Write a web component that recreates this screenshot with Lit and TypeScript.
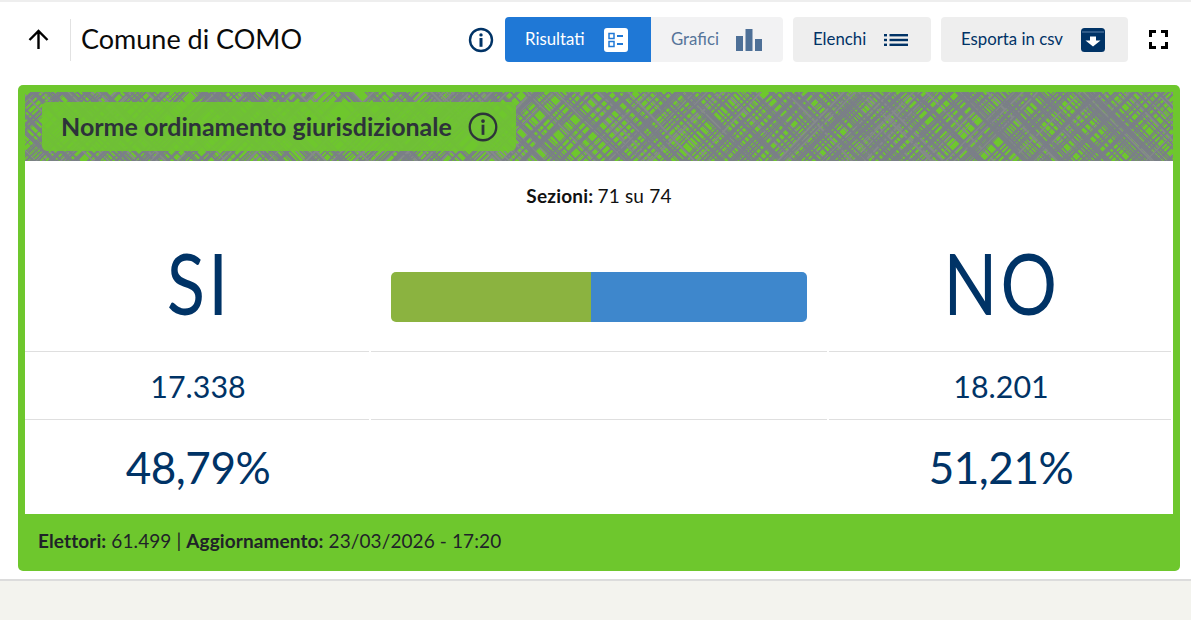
import { LitElement, html, css, svg } from "lit";
import { customElement } from "lit/decorators.js";

function textureLines() {
  let seed = 17;
  const rnd = () => {
    seed = (seed * 16807) % 2147483647;
    return seed / 2147483647;
  };
  const out: ReturnType<typeof svg>[] = [];
  for (let i = 0; i < 800; i++) {
    const x = -80 + rnd() * 1310;
    const dir = i % 2 === 0 ? 1 : -1;
    const slope = 0.94 + rnd() * 0.12;
    const w = 0.9 + rnd() * 1.3;
    const c = rnd() > 0.2 ? "#7b7f88" : "#868a8c";
    out.push(
      svg`<line x1=${x} y1="-5" x2=${x + dir * 80 * slope} y2="75" stroke=${c} stroke-width=${w} />`
    );
  }
  return out;
}

@customElement("app-root")
export class AppRoot extends LitElement {
  static styles = css`
    :host {
      display: block;
      min-height: 620px;
      background: #f3f3ee;
      font-family: "Lato", "Open Sans", sans-serif;
    }
    .panel {
      background: #fff;
      border-top: 2px solid #eeeeee;
      border-bottom: 2px solid #dcdcdc;
      padding: 0 11px 8px 18px;
      height: 581px;
      box-sizing: border-box;
    }
    .topbar {
      height: 83px;
      display: flex;
      align-items: center;
      margin-left: -18px;
      margin-right: -11px;
      padding: 0 23px 8px 28px;
      box-sizing: border-box;
    }
    .back {
      width: 21px;
      height: 21px;
      color: #000;
      flex: none;
    }
    .title {
      margin-left: 21px;
      padding-left: 10px;
      border-left: 1px solid #e2e2e2;
      height: 42px;
      line-height: 40px;
      font-size: 27px;
      color: #0a0a0a;
      white-space: nowrap;
      flex: none;
    }
    .spacer {
      flex: 1;
    }
    .info {
      width: 26px;
      height: 26px;
      flex: none;
      color: #003366;
    }
    .tabs {
      display: flex;
      margin-left: 11px;
    }
    .btn {
      display: flex;
      align-items: center;
      justify-content: space-between;
      height: 45px;
      box-sizing: border-box;
      font-size: 16.8px;
      background: #eeeeee;
      color: #003366;
      border-radius: 4px;
      padding: 0 23px 0 20px;
      white-space: nowrap;
    }
    .btn span {
      padding-bottom: 2px;
    }
    .btn svg {
      flex: none;
    }
    .tab-on {
      width: 146px;
      background: #1f78d6;
      color: #fff;
      border-radius: 4px 0 0 4px;
    }
    .tab-off {
      width: 132px;
      padding-right: 21px;
      background: #f2f2f3;
      color: #56759a;
      border-radius: 0 4px 4px 0;
    }
    .lists {
      width: 138px;
      margin-left: 10px;
    }
    .export {
      width: 187px;
      margin-left: 10px;
    }
    .full {
      width: 19px;
      height: 19px;
      margin-left: 21px;
      flex: none;
    }
    .card {
      background: #6ec72d;
      border-radius: 5px;
      padding: 7px 7px 0;
      height: 486px;
      box-sizing: border-box;
      display: flex;
      flex-direction: column;
    }
    .texture {
      position: relative;
      height: 69px;
      overflow: hidden;
      padding: 10px 17px;
      box-sizing: border-box;
      flex: none;
    }
    .texture-lines {
      position: absolute;
      inset: 0;
      width: 100%;
      height: 100%;
    }
    .pill {
      position: relative;
      width: 474px;
      height: 49px;
      box-sizing: border-box;
      display: flex;
      align-items: center;
      justify-content: space-between;
      padding: 0 18px 0 19px;
      background: rgba(110, 199, 45, 0.9);
      border-radius: 5px;
      font-size: 25px;
      font-weight: 700;
      color: #2d333a;
      white-space: nowrap;
    }
    .pill span {
      padding-bottom: 2px;
    }
    .pill svg {
      width: 30px;
      height: 30px;
      color: #2d333a;
      flex: none;
    }
    .body {
      flex: 1;
      background: #fff;
      display: flex;
      flex-direction: column;
      min-height: 0;
    }
    .sections {
      height: 70px;
      display: flex;
      align-items: center;
      justify-content: center;
      padding-bottom: 2px;
      box-sizing: border-box;
      font-size: 19px;
      letter-spacing: 0.2px;
      color: #111;
    }
    .sections b {
      margin-right: 4px;
    }
    .grid {
      flex: 1;
      display: grid;
      grid-template-columns: 344px 456px 342px;
      grid-template-rows: 121px 68px 1fr;
      column-gap: 2px;
      color: #003366;
      text-align: center;
    }
    .cell {
      display: flex;
      align-items: center;
      justify-content: center;
      box-sizing: border-box;
    }
    .rule {
      border-bottom: 1px solid #dfdfdf;
    }
    .name {
      font-size: 86px;
      padding-bottom: 20px;
    }
    .name span {
      display: inline-block;
      padding-left: 4px;
      transform: scaleX(0.82);
      letter-spacing: 4px;
    }
    .bar {
      display: flex;
      width: 416px;
      height: 50px;
      border-radius: 5px;
      overflow: hidden;
      margin-top: 11px;
    }
    .seg-si {
      background: #8bb340;
    }
    .seg-no {
      background: #3e87cc;
    }
    .votes {
      font-size: 30.4px;
      padding-left: 2px;
    }
    .pct {
      font-size: 44px;
      letter-spacing: -0.5px;
      padding-left: 2px;
    }
    .foot {
      height: 57px;
      flex: none;
      display: flex;
      align-items: center;
      padding: 0 0 4px 13px;
      box-sizing: border-box;
      font-size: 19px;
      letter-spacing: 0.1px;
      color: #1f2328;
      white-space: pre;
    }
  `;

  render() {
    const siBar = 48.08;
    return html`
      <div class="panel">
        <div class="topbar">
          <svg class="back" viewBox="0 0 21 21" fill="none" stroke="currentColor" stroke-width="2.4">
            <path d="M10.5 20V2M1.500 11l9-9 9 9" />
          </svg>
          <div class="title">Comune di COMO</div>
          <div class="spacer"></div>
          <svg class="info" viewBox="0 0 26 26">
            <circle cx="13" cy="13" r="11" fill="none" stroke="currentColor" stroke-width="2.4" />
            <circle cx="13" cy="7.900" r="1.700" fill="currentColor" />
            <rect x="11.500" y="11" width="3" height="8.800" fill="currentColor" />
          </svg>
          <div class="tabs">
            <div class="btn tab-on">
              <span>Risultati</span>
              <svg width="24" height="24" viewBox="0 0 24 24">
                <rect width="24" height="24" rx="3" fill="#fff" />
                <g fill="none" stroke="#1f78d6" stroke-width="1.500">
                  <rect x="5" y="5.500" width="5" height="5" />
                  <rect x="5" y="13.500" width="5" height="5" />
                </g>
                <rect x="13" y="7" width="6" height="2" fill="#1f78d6" />
                <rect x="13" y="15" width="6" height="2" fill="#1f78d6" />
              </svg>
            </div>
            <div class="btn tab-off">
              <span>Grafici</span>
              <svg width="26" height="24" viewBox="0 0 26 24" fill="#4e7097">
                <rect x="0" y="8" width="7" height="15" />
                <rect x="9.500" y="1" width="7" height="22" />
                <rect x="19" y="11" width="7" height="12" />
              </svg>
            </div>
          </div>
          <div class="btn lists">
            <span>Elenchi</span>
            <svg width="24" height="14" viewBox="0 0 24 14" fill="#003366">
              <rect x="0" y="1" width="3" height="2.400" />
              <rect x="0" y="5.800" width="3" height="2.400" />
              <rect x="0" y="10.600" width="3" height="2.400" />
              <rect x="5.500" y="1" width="18.500" height="2.400" />
              <rect x="5.500" y="5.800" width="18.500" height="2.400" />
              <rect x="5.500" y="10.600" width="18.500" height="2.400" />
            </svg>
          </div>
          <div class="btn export">
            <span>Esporta in csv</span>
            <svg width="24" height="24" viewBox="0 0 24 24">
              <rect width="24" height="24" rx="3.500" fill="#003366" />
              <rect x="1" y="3.500" width="22" height="1" fill="#5f84ab" />
              <path d="M9 8.500h6v4h4.500L12 18.500 4.500 12.500H9z" fill="#fff" />
            </svg>
          </div>
          <svg class="full" viewBox="0 0 19 19" fill="none" stroke="#000" stroke-width="3">
            <path d="M1.500 7V1.500H7M12 1.500h5.500V7M17.500 12v5.500H12M7 17.500H1.500V12" />
          </svg>
        </div>

        <div class="card">
          <div class="texture">
            <svg class="texture-lines" viewBox="0 0 1147 69" preserveAspectRatio="none">
              ${textureLines()}
            </svg>
            <div class="pill">
              <span>Norme ordinamento giurisdizionale</span>
              <svg viewBox="0 0 26 26">
                <circle cx="13" cy="13" r="11.500" fill="none" stroke="currentColor" stroke-width="2" />
                <circle cx="13" cy="7.900" r="1.600" fill="currentColor" />
                <rect x="11.800" y="11" width="2.400" height="8.800" fill="currentColor" />
              </svg>
            </div>
          </div>
          <div class="body">
            <div class="sections"><b>Sezioni:</b> 71 su 74</div>
            <div class="grid">
              <div class="cell rule name"><span>SI</span></div>
              <div class="cell rule">
                <div class="bar">
                  <div class="seg-si" style="width:${siBar}%"></div>
                  <div class="seg-no" style="width:${100 - siBar}%"></div>
                </div>
              </div>
              <div class="cell rule name"><span>NO</span></div>
              <div class="cell rule votes">17.338</div>
              <div class="cell rule"></div>
              <div class="cell rule votes">18.201</div>
              <div class="cell pct">48,79%</div>
              <div class="cell"></div>
              <div class="cell pct">51,21%</div>
            </div>
          </div>
          <div class="foot"><b>Elettori:</b> 61.499 | <b>Aggiornamento:</b> 23/03/2026 - 17:20</div>
        </div>
      </div>
    `;
  }
}
